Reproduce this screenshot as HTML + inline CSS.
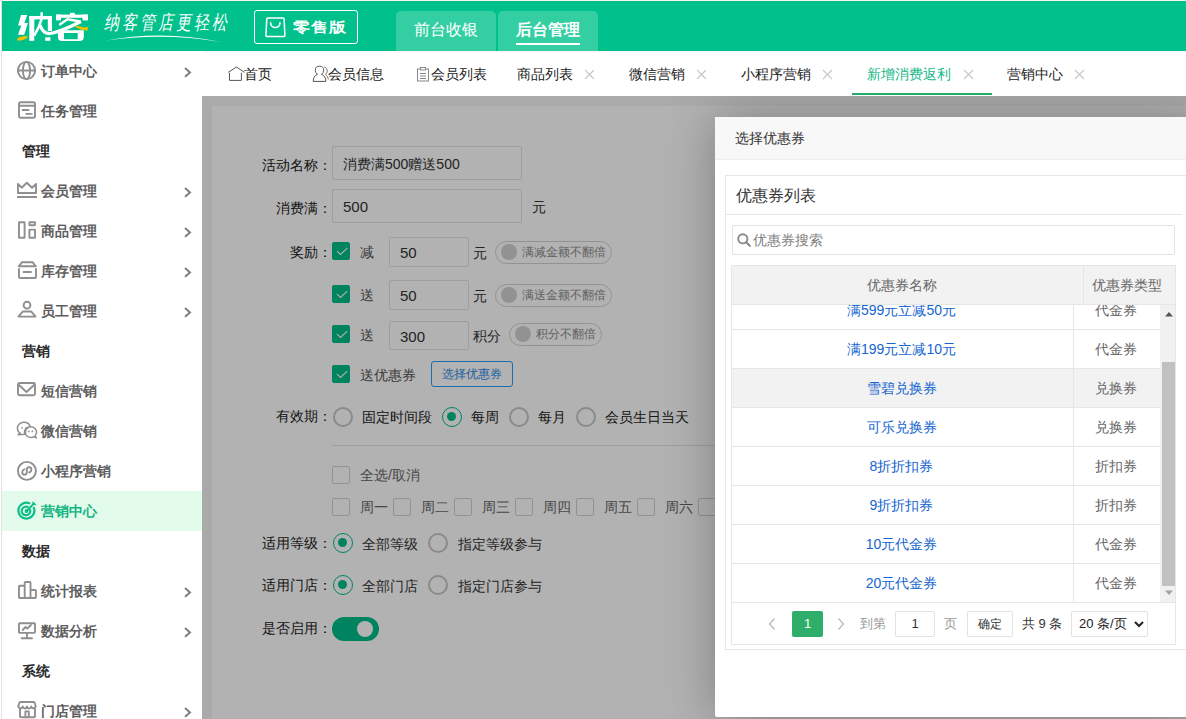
<!DOCTYPE html>
<html><head><meta charset="utf-8">
<style>
*{box-sizing:border-box;margin:0;padding:0}
html,body{width:1186px;height:719px;overflow:hidden;background:#fff;font-family:"Liberation Sans",sans-serif;font-size:14px;color:#333}
.a{position:absolute}
#top{left:0;top:0;width:1186px;height:1px;background:#fcf0f2}
#lb{left:1px;top:0;width:1px;height:719px;background:#e3e3e3}
#hdr{left:2px;top:1px;width:1184px;height:50px;background:#00c08b}
.t{white-space:nowrap;line-height:1}
.si{left:2px;width:200px;height:40px}
.si .tx{position:absolute;left:39px;top:0;line-height:40px;font-weight:bold;color:#5e5e5e;font-size:14px;white-space:nowrap}
.si.sec .tx{left:20px;color:#2a2a2a}
.si .ic{position:absolute;left:14px;top:9px;width:22px;height:22px}
.si .ar{position:absolute;left:180px;top:14px;width:12px;height:14px}
.tab{top:52px;height:45px;line-height:45px;font-size:14px;color:#222;white-space:nowrap}
#frm{left:202px;top:96px;width:984px;height:623px;overflow:hidden;background:#f4f4f4}
#card{left:10px;top:10px;width:1000px;height:700px;background:#fff}
#shade{left:0;top:0;width:984px;height:623px;background:rgba(0,0,0,.3)}
#dlg{left:513px;top:21px;width:490px;height:600px;background:#fff;border-radius:2px;box-shadow:1px 1px 50px rgba(0,0,0,.3)}
.lbl{white-space:nowrap;text-align:right;line-height:20px;font-size:14px;color:#1a1a1a}
.tx1{white-space:nowrap;line-height:20px;font-size:14px}
.c{text-align:center}
.inp{border:1px solid #e2e2e2;border-radius:2px;background:#fff;padding-left:10px;font-size:14px;color:#333;white-space:nowrap}
.cbk{width:18px;height:18px;border:1px solid #d2d2d2;border-radius:2px;background:#fff}
.cbk.on{background:#00be88;border-color:#00be88}
.cbk svg{position:absolute;left:-1px;top:-1px}
.rd{width:20px;height:20px;border:2px solid #c6c6c6;border-radius:50%;background:#fff}
.rd.on{border-color:#00be88;border-width:1.5px}
.rd .dot{position:absolute;left:4px;top:4px;width:9px;height:9px;border-radius:50%;background:#00be88}
.tog{height:23px;border:1px solid #d2d2d2;border-radius:12px;background:#fff}
.tog .kn{position:absolute;left:4.5px;top:2px;width:16px;height:16px;border-radius:50%;background:#d2d2d2}
.tog span{position:absolute;left:26px;top:0;line-height:21px;font-size:12px;color:#8c8c8c;white-space:nowrap}
.btnb{width:82px;height:26px;border:1px solid #2a9dfa;border-radius:3px;line-height:25px;text-align:center;font-size:12px;color:#2a8ae6;background:#fff}
.sw{width:47px;height:24px;border-radius:12px;background:#00be88}
.sw .kn{position:absolute;left:24.5px;top:4px;width:16px;height:16px;border-radius:50%;background:#fff}
</style></head><body>
<div class="a" id="top"></div><div class="a" id="lb"></div><div class="a" id="hdr"></div><div class="a" style="left:202px;top:51px;width:984px;height:1px;background:#fff5f8"></div><div class="a" style="left:202px;top:52px;width:984px;height:1px;background:#f8f8f8"></div>
<svg class="a" style="left:0;top:0" width="100" height="51" viewBox="0 0 100 51">
<g fill="#fff">
<path d="M21 15.1H27.2L24.4 23H27.9L24.2 34.8H18L21.3 25.4H18.1Z"/>
<rect x="29.3" y="16" width="5" height="24.8"/>
<rect x="29.3" y="16" width="22.7" height="3.4"/>
<rect x="47.8" y="16" width="4.2" height="15"/>
<rect x="40.4" y="12.2" width="2.5" height="7"/>
<rect x="45.2" y="37.3" width="5.2" height="3.5"/>
<rect x="70" y="12.8" width="4.8" height="3"/>
<rect x="56" y="14.6" width="32" height="3.2"/>
<rect x="56" y="14.6" width="5" height="5.8"/>
<rect x="82.5" y="14.6" width="5.5" height="5.8"/>
<path d="M57.9 30.2H83.8V37Q83.8 41 79.8 41H61.9Q57.9 41 57.9 37ZM64 33.1V39.2H77.7V33.1Z" fill-rule="evenodd"/>
</g>
<g stroke="#fff" fill="none" stroke-linecap="butt">
<path d="M41.6 19Q39 28 34.3 35.5" stroke-width="2.6"/>
<path d="M40 25Q43 34 50 33.5Q60 32 81 21.5" stroke-width="3.2"/>
<path d="M59.2 24.9L67.4 19.3L80.6 21.5" stroke-width="2.4"/>
</g>
<path d="M17.2 38.2Q22 35.8 27.5 36L26.8 38.2Q22 40.8 17.5 40.7Z" fill="#f7c000"/>
<path d="M75.5 25.8Q80 26 83.5 27.5L88 27L87.6 30.5Q81 30.5 76 27.6Z" fill="#f7c000"/>
</svg>
<div class="a t" style="left:104px;top:12px;font-size:15px;color:#fff;letter-spacing:3px;font-style:italic;font-weight:300;transform:scaleY(1.3);transform-origin:0 0">纳客管店更轻松</div>
<svg class="a" style="left:100px;top:30px" width="130" height="16"><path d="M5 10.8Q62 -0.5 121.5 12Q62 2.2 5 10.8Z" fill="#fff"/></svg>
<div class="a" style="left:254px;top:10px;width:104px;height:34px;border:1px solid #fff;border-radius:3px"></div>
<svg class="a" style="left:260px;top:12px" width="32" height="30"><path d="M7.8 5.9H23.2Q24 5.9 24.1 6.9L24.9 23.6Q24.9 24.5 24 24.5H6.8Q5.9 24.5 5.9 23.6L6.8 6.9Q6.9 5.9 7.8 5.9Z" stroke="#fff" stroke-width="1.5" fill="none"/><path d="M10.6 10.8A4.7 4.7 0 0 0 20 10.8" stroke="#fff" stroke-width="1.6" fill="none" stroke-linecap="round"/></svg>
<div class="a t" style="left:293px;top:18px;font-size:17.5px;font-weight:900;color:#fff;transform:scaleY(0.82);transform-origin:0 15px">零售版</div>
<div class="a" style="left:396px;top:11px;width:100px;height:40px;background:#33cfa2;border-radius:5px 5px 0 0"></div>
<div class="a" style="left:498px;top:11px;width:100px;height:40px;background:#33cfa2;border-radius:5px 5px 0 0"></div>
<div class="a t" style="left:414px;top:22px;font-size:16px;color:#fff;font-weight:500">前台收银</div>
<div class="a t" style="left:516px;top:22px;font-size:16px;color:#fff;font-weight:bold">后台管理</div>
<div class="a" style="left:516px;top:43px;width:64px;height:2px;background:#fff"></div>
<div class="si a" style="top:51px"><svg class="ic" width="22" height="22" viewBox="0 0 22 22"><circle cx="10.5" cy="10.5" r="8.6" stroke="#8f8f8f" stroke-width="1.9" fill="none"/><ellipse cx="10.5" cy="10.5" rx="3.6" ry="8.6" stroke="#8f8f8f" stroke-width="1.9" fill="none"/><path d="M2 10.5H19" stroke="#8f8f8f" stroke-width="1.9" fill="none" stroke-linejoin="round" stroke-linecap="round"/></svg><div class="tx">订单中心</div><svg class="ar" width="12" height="15"><path d="M3 3L8 7.4L3 11.8" stroke="#7b7d88" stroke-width="2" fill="none"/></svg></div>
<div class="si a" style="top:91px"><svg class="ic" width="22" height="22" viewBox="0 0 22 22"><rect x="3" y="2.2" width="16" height="15.6" rx="1.8" stroke="#8f8f8f" stroke-width="1.9" fill="none"/><path d="M3 5.8H19M6.5 10H12.5M10.3 13.9H15.8" stroke="#8f8f8f" stroke-width="1.9" fill="none" stroke-linejoin="round" stroke-linecap="round"/></svg><div class="tx">任务管理</div></div>
<div class="si a sec" style="top:131px"><div class="tx">管理</div></div>
<div class="si a" style="top:171px"><svg class="ic" width="22" height="22" viewBox="0 0 22 22"><path d="M2 13V4L5.7 7.7L10.8 2.8L16 7.7L20 4V13Z" stroke="#8f8f8f" stroke-width="1.9" fill="none" stroke-linejoin="round" stroke-linecap="round"/><path d="M1 17H21" stroke="#8f8f8f" stroke-width="2"/></svg><div class="tx">会员管理</div><svg class="ar" width="12" height="15"><path d="M3 3L8 7.4L3 11.8" stroke="#7b7d88" stroke-width="2" fill="none"/></svg></div>
<div class="si a" style="top:211px"><svg class="ic" width="22" height="22" viewBox="0 0 22 22"><rect x="3" y="2.3" width="5.6" height="15.5" rx=".4" stroke="#8f8f8f" stroke-width="1.9" fill="none"/><rect x="13.4" y="2.2" width="5.6" height="3" rx=".2" stroke="#8f8f8f" stroke-width="1.9" fill="none"/><rect x="13.4" y="9.6" width="5.6" height="8.2" rx=".4" stroke="#8f8f8f" stroke-width="1.9" fill="none"/></svg><div class="tx">商品管理</div><svg class="ar" width="12" height="15"><path d="M3 3L8 7.4L3 11.8" stroke="#7b7d88" stroke-width="2" fill="none"/></svg></div>
<div class="si a" style="top:251px"><svg class="ic" width="22" height="22" viewBox="0 0 22 22"><path d="M2.8 6.3L6 2.2H16.5L19.8 6.3Z" stroke="#8f8f8f" stroke-width="1.9" fill="none" stroke-linejoin="round" stroke-linecap="round"/><path d="M3 9V17Q3 18 4 18H19Q20 18 20 17V9" stroke="#8f8f8f" stroke-width="1.9" fill="none" stroke-linejoin="round" stroke-linecap="round"/><path d="M7.5 12H15" stroke="#8f8f8f" stroke-width="1.9" fill="none" stroke-linejoin="round" stroke-linecap="round"/></svg><div class="tx">库存管理</div><svg class="ar" width="12" height="15"><path d="M3 3L8 7.4L3 11.8" stroke="#7b7d88" stroke-width="2" fill="none"/></svg></div>
<div class="si a" style="top:291px"><svg class="ic" width="22" height="22" viewBox="0 0 22 22"><circle cx="11" cy="5.2" r="3.4" stroke="#8f8f8f" stroke-width="1.9" fill="none"/><path d="M2.5 16.6L6 12.3Q6.5 11.5 7.5 11.5H14.5Q15.5 11.5 16 12.3L19.5 16.6Z" stroke="#8f8f8f" stroke-width="1.9" fill="none" stroke-linejoin="round" stroke-linecap="round"/></svg><div class="tx">员工管理</div><svg class="ar" width="12" height="15"><path d="M3 3L8 7.4L3 11.8" stroke="#7b7d88" stroke-width="2" fill="none"/></svg></div>
<div class="si a sec" style="top:331px"><div class="tx">营销</div></div>
<div class="si a" style="top:371px"><svg class="ic" width="22" height="22" viewBox="0 0 22 22"><rect x="2" y="3" width="17" height="12.3" rx="1.5" stroke="#8f8f8f" stroke-width="1.9" fill="none"/><path d="M3 5L10.5 12L18 5" stroke="#8f8f8f" stroke-width="1.9" fill="none" stroke-linejoin="round" stroke-linecap="round"/></svg><div class="tx">短信营销</div></div>
<div class="si a" style="top:411px"><svg class="ic" width="22" height="22" viewBox="0 0 22 22"><path d="M9 14.2C8.6 13.6 8.4 12.9 8.4 12.1C8.4 9.3 10.9 7.1 13.3 7.1C13.7 7.1 14 7.1 14.4 7.2C13.7 4.4 11 2.3 7.8 2.3C4.2 2.3 1.4 4.9 1.4 8.2C1.4 10.3 2.5 12.1 4.2 13.1L2 14.8Z" stroke="#8f8f8f" stroke-width="1.5" fill="none" stroke-linejoin="round"/><path d="M20.5 12.2C20.5 9.3 18.2 6.8 15 6.8C11.8 6.8 9.4 9.3 9.4 12.2C9.4 15.1 11.8 17.4 15 17.4C15.9 17.4 16.7 17.2 17.5 16.9L20.3 17.9L19 15.8C20 14.8 20.5 13.6 20.5 12.2Z" stroke="#8f8f8f" stroke-width="1.5" fill="#fff" stroke-linejoin="round"/><circle cx="6" cy="7.8" r=".9" fill="#8f8f8f"/><circle cx="10.3" cy="7.8" r=".9" fill="#8f8f8f"/><circle cx="12.9" cy="11.4" r=".9" fill="#8f8f8f"/><circle cx="16.3" cy="11.4" r=".9" fill="#8f8f8f"/></svg><div class="tx">微信营销</div></div>
<div class="si a" style="top:451px"><svg class="ic" width="22" height="22" viewBox="0 0 22 22"><circle cx="10.9" cy="10.9" r="9" stroke="#8f8f8f" stroke-width="1.9" fill="none"/><path d="M8.3 9.3Q6.2 10 6.2 12.2Q6.2 14.6 8.5 14.6Q10.8 14.6 10.8 12.2V9.6Q10.8 7.2 13.1 7.2Q15.4 7.2 15.4 9.6Q15.4 11.8 13.3 12.5" stroke="#8f8f8f" stroke-width="1.9" fill="none" stroke-linejoin="round" stroke-linecap="round"/></svg><div class="tx">小程序营销</div></div>
<div class="si a" style="top:491px;background:#e3fbeb"><svg class="ic" width="22" height="22" viewBox="0 0 22 22"><path d="M17.5 7A8 8 0 1 1 14.2 3.6" stroke="#0fbd88" stroke-width="2.2" fill="none"/><path d="M13.8 9A4.3 4.3 0 1 1 12.4 7.4" stroke="#0fbd88" stroke-width="2.2" fill="none"/><circle cx="10.5" cy="11" r="1.9" fill="#0fbd88"/><path d="M10.5 11L17.5 4" stroke="#0fbd88" stroke-width="2"/><path d="M16 1.5L17 4.8L20.5 5.5L18.5 2.5Z" fill="#0fbd88"/></svg><div class="tx" style="color:#12b584">营销中心</div></div>
<div class="si a sec" style="top:531px"><div class="tx">数据</div></div>
<div class="si a" style="top:571px"><svg class="ic" width="22" height="22" viewBox="0 0 22 22"><path d="M3 18V6.5Q3 5.7 3.8 5.7H8.7V18M8.7 18V2.8Q8.7 2 9.5 2H13.7Q14.5 2 14.5 2.8V18M14.5 18V10H19.1Q19.9 10 19.9 10.8V17.2Q19.9 18 19.1 18H3.8Q3 18 3 17.2" stroke="#8f8f8f" stroke-width="1.9" fill="none" stroke-linejoin="round"/></svg><div class="tx">统计报表</div><svg class="ar" width="12" height="15"><path d="M3 3L8 7.4L3 11.8" stroke="#7b7d88" stroke-width="2" fill="none"/></svg></div>
<div class="si a" style="top:611px"><svg class="ic" width="22" height="22" viewBox="0 0 22 22"><rect x="3" y="3.2" width="16" height="9.7" rx=".8" stroke="#8f8f8f" stroke-width="1.9" fill="none"/><path d="M6.7 10L9.5 7L11.2 8.5L15 5" stroke="#8f8f8f" stroke-width="1.9" fill="none" stroke-linejoin="round" stroke-linecap="round"/><path d="M11 13V18M5.7 18.2H16" stroke="#8f8f8f" stroke-width="1.9" fill="none" stroke-linejoin="round" stroke-linecap="round"/></svg><div class="tx">数据分析</div><svg class="ar" width="12" height="15"><path d="M3 3L8 7.4L3 11.8" stroke="#7b7d88" stroke-width="2" fill="none"/></svg></div>
<div class="si a sec" style="top:651px"><div class="tx">系统</div></div>
<div class="si a" style="top:691px"><svg class="ic" width="22" height="22" viewBox="0 0 22 22"><path d="M4.5 2H17.5Q18.3 2 18.6 2.8L19.8 6.3Q18.7 8.6 16.7 8.2Q15.3 7.8 15.3 6.5Q14.5 8.5 13 8.5Q11.5 8.5 11 6.5Q10.5 8.5 9 8.5Q7.5 8.5 6.7 6.5Q6.7 7.8 5.3 8.2Q3.3 8.6 2.2 6.3L3.4 2.8Q3.7 2 4.5 2Z" stroke="#8f8f8f" stroke-width="1.9" fill="none" stroke-linejoin="round" stroke-linecap="round"/><path d="M4 8.7V16.3Q4 17.2 4.9 17.2H18.1Q19 17.2 19 16.3V8.7" stroke="#8f8f8f" stroke-width="1.9" fill="none" stroke-linejoin="round" stroke-linecap="round"/><path d="M9.4 17V11.4H12.8V17" stroke="#8f8f8f" stroke-width="1.9" fill="none" stroke-linejoin="round" stroke-linecap="round"/></svg><div class="tx">门店管理</div><svg class="ar" width="12" height="15"><path d="M3 3L8 7.4L3 11.8" stroke="#7b7d88" stroke-width="2" fill="none"/></svg></div>
<svg class="a" style="left:224px;top:62px" width="24" height="24"><path d="M4.3 10.3L12.4 5L20.4 10.3M5.5 10.8V18.4H17.4V10.8" stroke="#555" stroke-width="1" fill="none"/></svg>
<div class="a tab" style="left:244px">首页</div>
<svg class="a" style="left:308px;top:62px" width="24" height="24"><path d="M9.5 12.3Q7.3 10.8 7.3 8.3Q7.3 4.2 11.5 4.2Q15.7 4.2 15.7 8.3Q15.7 10.8 13.5 12.3Q17.8 14 17.8 19.4H5.2Q5.2 14 9.5 12.3Z" stroke="#555" stroke-width="1" fill="none"/><path d="M16.3 4.8Q19.3 6 19.3 9Q19.3 11 17.4 12.4Q20.3 14 20.3 17.5" stroke="#777" stroke-width="1" fill="none"/></svg>
<div class="a tab" style="left:328px">会员信息</div>
<svg class="a" style="left:416px;top:67px" width="14" height="15"><rect x="1.5" y="2" width="11" height="12" stroke="#888" stroke-width="1" fill="none"/><rect x="4.5" y="0.5" width="5" height="2.5" stroke="#888" stroke-width="1" fill="#fff"/><path d="M4 6.5H10M4 9H10M4 11.5H10" stroke="#888" stroke-width="1"/></svg>
<div class="a tab" style="left:431px">会员列表</div>
<div class="a tab" style="left:517px">商品列表</div>
<div class="a tab" style="left:629px">微信营销</div>
<div class="a tab" style="left:741px">小程序营销</div>
<div class="a tab" style="left:867px;color:#17b98a">新增消费返利</div>
<div class="a tab" style="left:1007px">营销中心</div>
<div class="a" style="left:852px;top:93px;width:140px;height:2px;background:#23ad68"></div>
<svg class="a" style="left:584px;top:69px" width="11" height="11"><path d="M1 1L10 10M10 1L1 10" stroke="#c8c8c8" stroke-width="1.2"/></svg><svg class="a" style="left:696px;top:69px" width="11" height="11"><path d="M1 1L10 10M10 1L1 10" stroke="#c8c8c8" stroke-width="1.2"/></svg><svg class="a" style="left:822px;top:69px" width="11" height="11"><path d="M1 1L10 10M10 1L1 10" stroke="#c8c8c8" stroke-width="1.2"/></svg><svg class="a" style="left:963px;top:69px" width="11" height="11"><path d="M1 1L10 10M10 1L1 10" stroke="#c8c8c8" stroke-width="1.2"/></svg><svg class="a" style="left:1074px;top:69px" width="11" height="11"><path d="M1 1L10 10M10 1L1 10" stroke="#c8c8c8" stroke-width="1.2"/></svg>
<div class="a" id="frm">
<div class="a" id="card"></div>
<div class="a lbl" style="left:10px;top:59px;width:120px">活动名称：</div><div class="a inp" style="left:130px;top:50px;width:190px;height:34px;line-height:34px">消费满500赠送500</div>
<div class="a lbl" style="left:10px;top:102px;width:120px">消费满：</div><div class="a inp" style="left:130px;top:93px;width:190px;height:34px;line-height:34px"><span style="font-size:15px">500</span></div><div class="a tx1" style="left:330px;top:101px;color:#333">元</div>
<div class="a lbl" style="left:10px;top:145.5px;width:120px">奖励：</div>
<div class="a cbk on" style="left:130px;top:146px"><svg width="18" height="18"><path d="M5 9.1L8.5 12.5L15.3 6.2" stroke="#fff" stroke-width="1.1" fill="none"/></svg></div><div class="a tx1" style="left:158px;top:146px;color:#555">减</div><div class="a inp" style="left:187px;top:141px;width:80px;height:30px;line-height:30px"><span style="font-size:15px">50</span></div><div class="a tx1" style="left:271px;top:147px;color:#333">元</div><div class="a tog" style="left:293px;top:145px;width:117px"><div class="kn"></div><span>满减金额不翻倍</span></div>
<div class="a cbk on" style="left:130px;top:189px"><svg width="18" height="18"><path d="M5 9.1L8.5 12.5L15.3 6.2" stroke="#fff" stroke-width="1.1" fill="none"/></svg></div><div class="a tx1" style="left:158px;top:189px;color:#555">送</div><div class="a inp" style="left:187px;top:184px;width:80px;height:30px;line-height:30px"><span style="font-size:15px">50</span></div><div class="a tx1" style="left:271px;top:190px;color:#333">元</div><div class="a tog" style="left:293px;top:188px;width:117px"><div class="kn"></div><span>满送金额不翻倍</span></div>
<div class="a cbk on" style="left:130px;top:229px"><svg width="18" height="18"><path d="M5 9.1L8.5 12.5L15.3 6.2" stroke="#fff" stroke-width="1.1" fill="none"/></svg></div><div class="a tx1" style="left:158px;top:229px;color:#555">送</div><div class="a inp" style="left:187px;top:225px;width:80px;height:29px;line-height:29px"><span style="font-size:15px">300</span></div><div class="a tx1" style="left:271px;top:230px;color:#333">积分</div><div class="a tog" style="left:307px;top:227px;width:93px"><div class="kn"></div><span>积分不翻倍</span></div>
<div class="a cbk on" style="left:130px;top:269px"><svg width="18" height="18"><path d="M5 9.1L8.5 12.5L15.3 6.2" stroke="#fff" stroke-width="1.1" fill="none"/></svg></div><div class="a tx1" style="left:158px;top:269px;color:#555">送优惠券</div>
<div class="a btnb" style="left:229px;top:265px">选择优惠券</div>
<div class="a lbl" style="left:10px;top:310px;width:120px">有效期：</div>
<div class="a rd" style="left:131px;top:311px"></div><div class="a tx1" style="left:160px;top:310.5px;color:#222">固定时间段</div>
<div class="a rd on" style="left:240px;top:311px"><div class="dot"></div></div><div class="a tx1" style="left:269px;top:310.5px;color:#222">每周</div>
<div class="a rd" style="left:307px;top:311px"></div><div class="a tx1" style="left:336px;top:310.5px;color:#222">每月</div>
<div class="a rd" style="left:374px;top:311px"></div><div class="a tx1" style="left:403px;top:310.5px;color:#222">会员生日当天</div>
<div class="a" style="left:130px;top:349px;width:400px;height:1px;background:#e2e2e2"></div>
<div class="a cbk" style="left:130px;top:370px"></div><div class="a tx1" style="left:158px;top:369px;color:#666">全选/取消</div>
<div class="a cbk" style="left:130px;top:402px"></div><div class="a tx1" style="left:158px;top:401px;color:#666">周一</div>
<div class="a cbk" style="left:191px;top:402px"></div><div class="a tx1" style="left:219px;top:401px;color:#666">周二</div>
<div class="a cbk" style="left:252px;top:402px"></div><div class="a tx1" style="left:280px;top:401px;color:#666">周三</div>
<div class="a cbk" style="left:313px;top:402px"></div><div class="a tx1" style="left:341px;top:401px;color:#666">周四</div>
<div class="a cbk" style="left:374px;top:402px"></div><div class="a tx1" style="left:402px;top:401px;color:#666">周五</div>
<div class="a cbk" style="left:435px;top:402px"></div><div class="a tx1" style="left:463px;top:401px;color:#666">周六</div>
<div class="a cbk" style="left:496px;top:402px"></div><div class="a tx1" style="left:524px;top:401px;color:#666">周日</div>
<div class="a lbl" style="left:10px;top:436.5px;width:120px">适用等级：</div><div class="a rd on" style="left:131px;top:437px"><div class="dot"></div></div><div class="a tx1" style="left:160px;top:438px;color:#333">全部等级</div><div class="a rd" style="left:226px;top:437px"></div><div class="a tx1" style="left:256px;top:438px;color:#333">指定等级参与</div>
<div class="a lbl" style="left:10px;top:478.5px;width:120px">适用门店：</div><div class="a rd on" style="left:131px;top:479px"><div class="dot"></div></div><div class="a tx1" style="left:160px;top:480px;color:#333">全部门店</div><div class="a rd" style="left:226px;top:479px"></div><div class="a tx1" style="left:256px;top:480px;color:#333">指定门店参与</div>
<div class="a lbl" style="left:10px;top:522px;width:120px">是否启用：</div>
<div class="a sw" style="left:130px;top:521px"><div class="kn"></div></div>
<div class="a" id="shade"></div>
<div class="a" id="dlg">
<div class="a" style="left:0;top:0;width:490px;height:43px;background:#f8f8f8;border-bottom:1px solid #eee"></div>
<div class="a tx1" style="left:20px;top:11px;font-size:14px;color:#333">选择优惠券</div>
<div class="a" style="left:10px;top:58px;width:500px;height:475px;border:1px solid #e6e6e6"></div>
<div class="a tx1" style="left:21px;top:68.5px;font-size:16px;color:#333">优惠券列表</div>
<div class="a" style="left:10px;top:97px;width:457px;height:1px;background:#e6e6e6"></div>
<div class="a" style="left:17px;top:108px;width:443px;height:30px;border:1px solid #e2e2e2;border-radius:2px"></div>
<svg class="a" style="left:21px;top:115px" width="16" height="16"><circle cx="6.8" cy="6.8" r="4.6" stroke="#8a8a8a" stroke-width="1.9" fill="none"/><path d="M10.2 10.2L13.8 13.8" stroke="#8a8a8a" stroke-width="2.2" stroke-linecap="round"/></svg>
<div class="a tx1" style="left:38px;top:113px;font-size:14px;color:#7f7f7f">优惠券搜索</div>
<div class="a" style="left:16px;top:148px;width:445px;height:40px;background:#f2f2f2;border:1px solid #e6e6e6"></div>
<div class="a" style="left:368px;top:148px;width:1px;height:39px;background:#e6e6e6"></div>
<div class="a tx1 c" style="left:11px;top:158px;width:352px;color:#666">优惠券名称</div>
<div class="a tx1 c" style="left:365.5px;top:158px;width:93px;color:#666">优惠券类型</div>
<div class="a" style="left:16px;top:188px;width:445px;height:298px;overflow:hidden;border-left:1px solid #e6e6e6;border-right:1px solid #e6e6e6"><div class="a" style="left:0;top:-14px;width:428px;height:39px;background:#fff;border-bottom:1px solid #e6e6e6"></div><div class="a tx1 c" style="left:-1.5px;top:-5px;width:342px;color:#1565d0">满599元立减50元</div><div class="a tx1 c" style="left:340px;top:-5px;width:87px;color:#666">代金券</div><div class="a" style="left:0;top:25px;width:428px;height:39px;background:#fff;border-bottom:1px solid #e6e6e6"></div><div class="a tx1 c" style="left:-1.5px;top:34px;width:342px;color:#1565d0">满199元立减10元</div><div class="a tx1 c" style="left:340px;top:34px;width:87px;color:#666">代金券</div><div class="a" style="left:0;top:64px;width:428px;height:39px;background:#f2f2f2;border-bottom:1px solid #e6e6e6"></div><div class="a tx1 c" style="left:-1.5px;top:73px;width:342px;color:#1565d0">雪碧兑换券</div><div class="a tx1 c" style="left:340px;top:73px;width:87px;color:#666">兑换券</div><div class="a" style="left:0;top:103px;width:428px;height:39px;background:#fff;border-bottom:1px solid #e6e6e6"></div><div class="a tx1 c" style="left:-1.5px;top:112px;width:342px;color:#1565d0">可乐兑换券</div><div class="a tx1 c" style="left:340px;top:112px;width:87px;color:#666">兑换券</div><div class="a" style="left:0;top:142px;width:428px;height:39px;background:#fff;border-bottom:1px solid #e6e6e6"></div><div class="a tx1 c" style="left:-1.5px;top:151px;width:342px;color:#1565d0">8折折扣券</div><div class="a tx1 c" style="left:340px;top:151px;width:87px;color:#666">折扣券</div><div class="a" style="left:0;top:181px;width:428px;height:39px;background:#fff;border-bottom:1px solid #e6e6e6"></div><div class="a tx1 c" style="left:-1.5px;top:190px;width:342px;color:#1565d0">9折折扣券</div><div class="a tx1 c" style="left:340px;top:190px;width:87px;color:#666">折扣券</div><div class="a" style="left:0;top:220px;width:428px;height:39px;background:#fff;border-bottom:1px solid #e6e6e6"></div><div class="a tx1 c" style="left:-1.5px;top:229px;width:342px;color:#1565d0">10元代金券</div><div class="a tx1 c" style="left:340px;top:229px;width:87px;color:#666">代金券</div><div class="a" style="left:0;top:259px;width:428px;height:39px;background:#fff;border-bottom:1px solid #e6e6e6"></div><div class="a tx1 c" style="left:-1.5px;top:268px;width:342px;color:#1565d0">20元代金券</div><div class="a tx1 c" style="left:340px;top:268px;width:87px;color:#666">代金券</div><div class="a" style="left:341px;top:0;width:1px;height:298px;background:#e6e6e6"></div><div class="a" style="left:428px;top:0;width:16px;height:298px;background:#f1f1f1"></div><div class="a" style="left:430px;top:57px;width:13px;height:224px;background:#c1c1c1"></div><svg class="a" style="left:430px;top:4px" width="14" height="10"><path d="M3 7.5L7 3L11 7.5Z" fill="#555"/></svg><svg class="a" style="left:430px;top:283px" width="14" height="10"><path d="M3 2.5L7 7L11 2.5Z" fill="#a3a3a3"/></svg></div>
<div class="a" style="left:16px;top:485px;width:445px;height:43px;border:1px solid #e6e6e6"></div>
<svg class="a" style="left:51px;top:500px" width="12" height="14"><path d="M8.5 1.5L3.5 7L8.5 12.5" stroke="#bbb" stroke-width="1.3" fill="none"/></svg>
<div class="a tx1 c" style="left:77px;top:494px;width:31px;height:26px;line-height:26px;background:#2eae69;color:#fff;border-radius:2px;font-size:13px">1</div>
<svg class="a" style="left:120px;top:500px" width="12" height="14"><path d="M3.5 1.5L8.5 7L3.5 12.5" stroke="#bbb" stroke-width="1.3" fill="none"/></svg>
<div class="a tx1" style="left:145px;top:497px;font-size:13px;color:#999">到第</div>
<div class="a tx1 c" style="left:180px;top:494px;width:40px;height:26px;line-height:24px;border:1px solid #e2e2e2;border-radius:2px;font-size:13px;color:#333">1</div>
<div class="a tx1" style="left:229px;top:497px;font-size:13px;color:#999">页</div>
<div class="a tx1 c" style="left:252px;top:494px;width:46px;height:26px;line-height:24px;border:1px solid #e2e2e2;border-radius:2px;font-size:12px;color:#333">确定</div>
<div class="a tx1" style="left:307px;top:497px;font-size:13px;color:#333">共 9 条</div>
<div class="a" style="left:356px;top:494px;width:77px;height:26px;border:1px solid #e2e2e2;border-radius:2px"></div>
<div class="a tx1" style="left:364px;top:497px;font-size:13px;color:#222">20 条/页</div>
<svg class="a" style="left:418px;top:502px" width="12" height="10"><path d="M2 3L6 7L10 3" stroke="#222" stroke-width="2" fill="none"/></svg>
</div>
</div>
</body></html>
